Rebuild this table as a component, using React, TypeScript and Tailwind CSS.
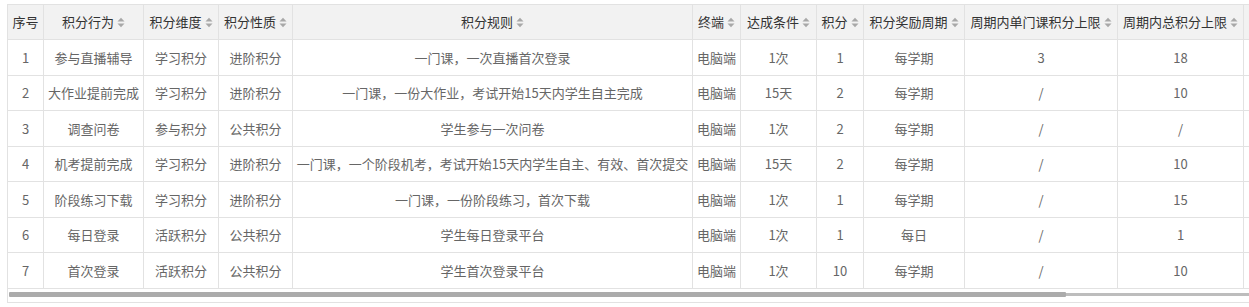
type Row = {
  no: number;
  action: string;
  dim: string;
  kind: string;
  rule: string;
  term: string;
  cond: string;
  score: string;
  cycle: string;
  single: string;
  total: string;
};

const rows: Row[] = [
  { no: 1, action: "参与直播辅导", dim: "学习积分", kind: "进阶积分", rule: "一门课，一次直播首次登录", term: "电脑端", cond: "1次", score: "1", cycle: "每学期", single: "3", total: "18" },
  { no: 2, action: "大作业提前完成", dim: "学习积分", kind: "进阶积分", rule: "一门课，一份大作业，考试开始15天内学生自主完成", term: "电脑端", cond: "15天", score: "2", cycle: "每学期", single: "/", total: "10" },
  { no: 3, action: "调查问卷", dim: "参与积分", kind: "公共积分", rule: "学生参与一次问卷", term: "电脑端", cond: "1次", score: "2", cycle: "每学期", single: "/", total: "/" },
  { no: 4, action: "机考提前完成", dim: "学习积分", kind: "进阶积分", rule: "一门课，一个阶段机考，考试开始15天内学生自主、有效、首次提交", term: "电脑端", cond: "15天", score: "2", cycle: "每学期", single: "/", total: "10" },
  { no: 5, action: "阶段练习下载", dim: "学习积分", kind: "进阶积分", rule: "一门课，一份阶段练习，首次下载", term: "电脑端", cond: "1次", score: "1", cycle: "每学期", single: "/", total: "15" },
  { no: 6, action: "每日登录", dim: "活跃积分", kind: "公共积分", rule: "学生每日登录平台", term: "电脑端", cond: "1次", score: "1", cycle: "每日", single: "/", total: "1" },
  { no: 7, action: "首次登录", dim: "活跃积分", kind: "公共积分", rule: "学生首次登录平台", term: "电脑端", cond: "1次", score: "10", cycle: "每学期", single: "/", total: "10" },
];

const cols: { title: string; width: number; sort: boolean }[] = [
  { title: "序号", width: 36, sort: false },
  { title: "积分行为", width: 100, sort: true },
  { title: "积分维度", width: 75, sort: true },
  { title: "积分性质", width: 74, sort: true },
  { title: "积分规则", width: 400, sort: true },
  { title: "终端", width: 48, sort: true },
  { title: "达成条件", width: 76, sort: true },
  { title: "积分", width: 47, sort: true },
  { title: "积分奖励周期", width: 101, sort: true },
  { title: "周期内单门课积分上限", width: 153, sort: true },
  { title: "周期内总积分上限", width: 126, sort: true },
  { title: "", width: 220, sort: false },
];

function SortIcon() {
  return (
    <svg width="8" height="11" viewBox="0 0 8 11" className="inline-block ml-[3px] align-[-1px]">
      <path d="M0.5 4.5 L4 0.8 L7.5 4.5 Z" fill="#a8a8a8" />
      <path d="M0.5 6.5 L4 10.2 L7.5 6.5 Z" fill="#a8a8a8" />
    </svg>
  );
}

export default function App() {
  const cell = "border border-[#e2e2e2] text-center whitespace-nowrap px-[2px] overflow-hidden";

  return (
    <div
      className="bg-white w-[1249px] h-[307px] overflow-hidden pt-[4px] pl-[7px]"
      style={{ fontFamily: '"Noto Sans CJK SC", "Liberation Sans", sans-serif' }}
    >
      <div className="border-l border-[#e2e2e2]">
        <div className="overflow-hidden">
          <table className="table-fixed border-collapse text-[13px] -ml-px" style={{ width: cols.reduce((s, c) => s + c.width, 0) }}>
            <colgroup>
              {cols.map((c, i) => (
                <col key={i} style={{ width: c.width }} />
              ))}
            </colgroup>
            <thead>
              <tr className="h-[35px] bg-[#f2f2f2] text-[#333]">
                {cols.map((c, i) => (
                  <th key={i} className={`${cell} font-normal`}>
                    {c.title}
                    {c.sort && <SortIcon />}
                  </th>
                ))}
              </tr>
            </thead>
            <tbody className="text-[#666]">
              {rows.map((r) => (
                <tr key={r.no} className="h-[35.5px]">
                  <td className={cell}>{r.no}</td>
                  <td className={cell}>{r.action}</td>
                  <td className={cell}>{r.dim}</td>
                  <td className={cell}>{r.kind}</td>
                  <td className={cell}>{r.rule}</td>
                  <td className={cell}>{r.term}</td>
                  <td className={cell}>{r.cond}</td>
                  <td className={cell}>{r.score}</td>
                  <td className={cell}>{r.cycle}</td>
                  <td className={cell}>{r.single}</td>
                  <td className={cell}>{r.total}</td>
                  <td className={cell}></td>
                </tr>
              ))}
            </tbody>
          </table>
        </div>
        {/* scrollbar */}
        <div className="flex items-center h-[14px] pl-px pb-[1px] border-b border-[#e2e2e2]">
          <div className="w-[1057px] h-[5px] bg-[#ababab] rounded-[1px]" />
          <div className="flex-1 h-[3px] bg-[#bdbdbd]" />
        </div>
      </div>
    </div>
  );
}
